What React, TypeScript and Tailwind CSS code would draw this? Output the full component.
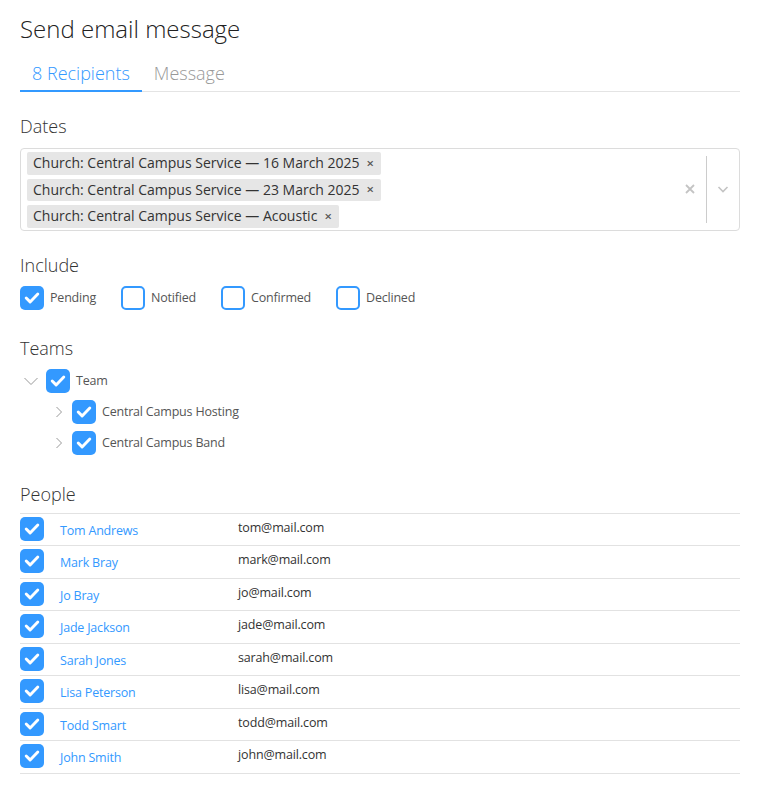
import React from "react";

function Check({ checked = true }: { checked?: boolean }) {
  if (!checked) {
    return <div className="w-6 h-6 shrink-0 rounded-[5px] border-2 border-[#3399ff] bg-white" />;
  }
  return (
    <div className="w-6 h-6 shrink-0 rounded-[5px] bg-[#3399ff] flex items-center justify-center">
      <svg width="24" height="24" viewBox="0 0 24 24" fill="none">
        <path d="M6.2 12l3.9 3.9L17.8 8" stroke="white" strokeWidth="2.9" strokeLinecap="round" strokeLinejoin="round" />
      </svg>
    </div>
  );
}

function ChevronRight() {
  return (
    <svg width="14" height="14" viewBox="0 0 14 14" fill="none">
      <path d="M4.5 2l5 5-5 5" stroke="#999" strokeWidth="1" />
    </svg>
  );
}

function ChevronDown() {
  return (
    <svg width="16" height="14" viewBox="0 0 16 14" fill="none">
      <path d="M1.5 4l6.5 6.5L14.5 4" stroke="#999" strokeWidth="1" />
    </svg>
  );
}

const tags = [
  "Church: Central Campus Service — 16 March 2025",
  "Church: Central Campus Service — 23 March 2025",
  "Church: Central Campus Service — Acoustic",
];

const people = [
  ["Tom Andrews", "tom@mail.com"],
  ["Mark Bray", "mark@mail.com"],
  ["Jo Bray", "jo@mail.com"],
  ["Jade Jackson", "jade@mail.com"],
  ["Sarah Jones", "sarah@mail.com"],
  ["Lisa Peterson", "lisa@mail.com"],
  ["Todd Smart", "todd@mail.com"],
  ["John Smith", "john@mail.com"],
];

function SectionLabel({ children, className = "" }: { children: React.ReactNode; className?: string }) {
  return <div className={`text-[18px] leading-6 font-light text-[#333] ${className}`}>{children}</div>;
}

export default function App() {
  return (
    <div
      className="min-h-[795px] bg-white pl-5 pr-[21px] pt-[13px]"
      style={{ fontFamily: '"Segoe UI", "Open Sans", "Noto Sans", sans-serif' }}
    >
      <div className="text-[24px] leading-8 font-light text-[#222]">Send email message</div>

      <div className="mt-4 flex border-b border-[#e4e4e4]">
        <div className="px-3 pb-[5px] text-[18px] leading-6 font-light text-[#3399ff] border-b-2 border-[#3399ff] -mb-px">
          8 Recipients
        </div>
        <div className="px-3 pb-[5px] text-[18px] leading-6 font-light text-[#999]">Message</div>
      </div>

      <SectionLabel className="mt-[22px]">Dates</SectionLabel>

      <div className="mt-[10px] flex rounded-[4px] border border-[#dcdcdc] min-h-[82px]">
        <div className="flex-1 flex flex-col items-start pl-[6px] pt-px">
          {tags.map((t) => (
            <div
              key={t}
              className="my-[2px] h-[22.5px] flex items-center rounded-[2px] bg-[#e6e6e6] text-[14px] text-[#333] pl-[6px]"
            >
              <span className="leading-none">{t}</span>
              <span className="px-[7px] text-[13px] font-semibold text-[#555] leading-none">×</span>
            </div>
          ))}
        </div>
        <div className="flex items-center">
          <div className="pl-2 pr-[9px]">
            <svg width="14" height="14" viewBox="0 0 14 14" fill="none">
              <path d="M3 3l8 8M11 3l-8 8" stroke="#c4c4c4" strokeWidth="1.8" />
            </svg>
          </div>
          <div className="w-px self-stretch my-[7px] bg-[#cccccc]" />
          <div className="px-2">
            <svg width="16" height="16" viewBox="0 0 16 16" fill="none">
              <path d="M3.5 6l4.5 4.5L12.5 6" stroke="#c4c4c4" strokeWidth="1.6" />
            </svg>
          </div>
        </div>
      </div>

      <SectionLabel className="mt-[22px]">Include</SectionLabel>
      <div className="mt-[9px] flex items-center gap-[25px]">
        {[
          ["Pending", true],
          ["Notified", false],
          ["Confirmed", false],
          ["Declined", false],
        ].map(([l, c]) => (
          <div key={l as string} className="flex items-center gap-[6px]">
            <Check checked={c as boolean} />
            <span className="pt-[2px] text-[12.5px] tracking-[-0.2px] text-[#555]">{l as string}</span>
          </div>
        ))}
      </div>

      <SectionLabel className="mt-[26px]">Teams</SectionLabel>
      <div className="mt-[9px] flex flex-col gap-[7px]">
        <div className="flex items-center h-6">
          <div className="w-[26px] flex items-center pl-[3px]">
            <ChevronDown />
          </div>
          <Check />
          <span className="pt-px ml-[6px] text-[12.5px] tracking-[-0.2px] text-[#555]">Team</span>
        </div>
        {["Central Campus Hosting", "Central Campus Band"].map((t) => (
          <div key={t} className="flex items-center h-6 pl-[26px]">
            <div className="w-[26px] flex items-center pl-[6px]">
              <ChevronRight />
            </div>
            <Check />
            <span className="pt-px ml-[6px] text-[12.5px] tracking-[-0.2px] text-[#555]">{t}</span>
          </div>
        ))}
      </div>

      <SectionLabel className="mt-[27px]">People</SectionLabel>
      <div className="mt-[7px] border-t border-[#e2e2e2]">
        {people.map(([n, e]) => (
          <div key={n} className="flex h-[32.5px] border-b border-[#e2e2e2]">
            <div className="pt-[3px]">
              <Check />
            </div>
            <div className="ml-4 w-[178px] pt-[7px] text-[12.5px] tracking-[-0.2px] leading-5 text-[#3399ff]">{n}</div>
            <div className="pt-[4px] text-[12.5px] tracking-[-0.15px] leading-5 text-[#333]">{e}</div>
          </div>
        ))}
      </div>
    </div>
  );
}
